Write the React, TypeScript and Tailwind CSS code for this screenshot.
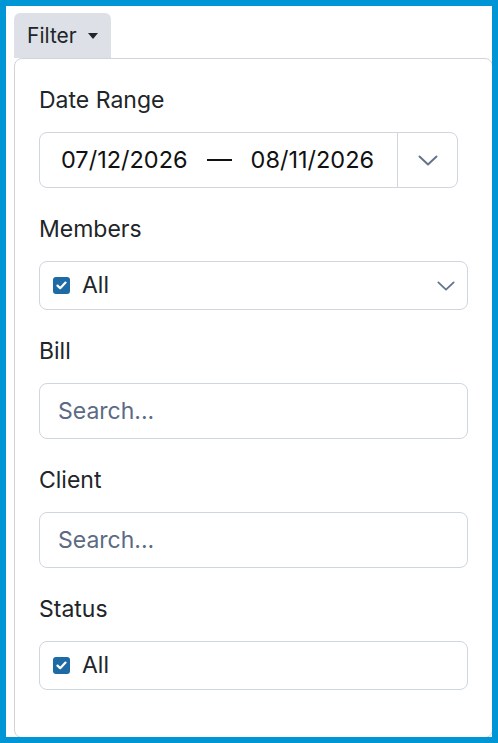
import React from 'react';

const font = { fontFamily: 'Inter, "Noto Sans", sans-serif' };

function Chevron({ w = 20, h = 11 }: { w?: number; h?: number }) {
  return (
    <svg width={w} height={h} viewBox="0 0 20 11" fill="none">
      <path d="M1.5 1.5L10 9.5L18.5 1.5" stroke="#64748b" strokeWidth="2" strokeLinecap="round" strokeLinejoin="round" />
    </svg>
  );
}

function Check() {
  return (
    <span className="w-[17px] h-[17px] rounded-[3px] bg-[#1d6aa5] flex items-center justify-center shrink-0">
      <svg width="11" height="9" viewBox="0 0 11 9" fill="none">
        <path d="M1.5 4.6L4.2 7.2L9.5 1.6" stroke="white" strokeWidth="2.2" strokeLinecap="round" strokeLinejoin="round" />
      </svg>
    </span>
  );
}

function Label({ children }: { children: React.ReactNode }) {
  return <div className="text-[23px] leading-[31px] text-[#212529] mb-4">{children}</div>;
}

function SearchBox() {
  return (
    <input
      type="text"
      placeholder="Search..."
      className="w-full h-14 border border-[#cfd6df] rounded-lg px-[18px] text-[23px] text-[#212529] placeholder:text-[#5b6b84] outline-none"
      style={font}
    />
  );
}

function AllSelect({ chevron }: { chevron?: boolean }) {
  return (
    <div className="w-full h-[49px] border border-[#cfd6df] rounded-lg flex items-center pl-[13px] pr-[12px]">
      <Check />
      <span className="ml-3 text-[23px] text-[#212529] flex-1">All</span>
      {chevron && <Chevron w={18} h={10} />}
    </div>
  );
}

export default function App() {
  return (
    <div className="h-[743px] w-full border-[6px] border-[#0096d6] bg-white overflow-hidden" style={font}>
      <div className="pl-2 pt-[7px]">
        {/* Filter toggle */}
        <button className="h-[45px] w-[97px] bg-[#dde1e7] rounded-t-[6px] flex items-center pl-[13px] text-[21px] text-[#212529]">
          Filter
          <span className="ml-[11px] w-0 h-0 border-t-[6px] border-t-[#212529] border-x-[5px] border-x-transparent" />
        </button>

        {/* Dropdown panel */}
        <div className="w-[479px] border border-[#cfd4da] rounded-[8px] pt-[26px] pb-[47px] px-6">
          <div className="mb-[26px]">
            <Label>Date Range</Label>
            <div className="w-[419px] h-14 border border-[#cfd6df] rounded-lg flex">
              <div className="flex-1 flex items-center pl-[21px] text-[23.5px] text-[#111]">
                <span>07/12/2026</span>
                <span className="mx-[19px] w-[25px] h-[2px] bg-[#111]" />
                <span>08/11/2026</span>
              </div>
              <div className="w-[60px] border-l border-[#cfd6df] flex items-center justify-center">
                <Chevron />
              </div>
            </div>
          </div>

          <div className="mb-[26px]">
            <Label>Members</Label>
            <AllSelect chevron />
          </div>

          <div className="mb-[26px]">
            <Label>Bill</Label>
            <SearchBox />
          </div>

          <div className="mb-[26px]">
            <Label>Client</Label>
            <SearchBox />
          </div>

          <div>
            <Label>Status</Label>
            <AllSelect />
          </div>
        </div>
      </div>
    </div>
  );
}
